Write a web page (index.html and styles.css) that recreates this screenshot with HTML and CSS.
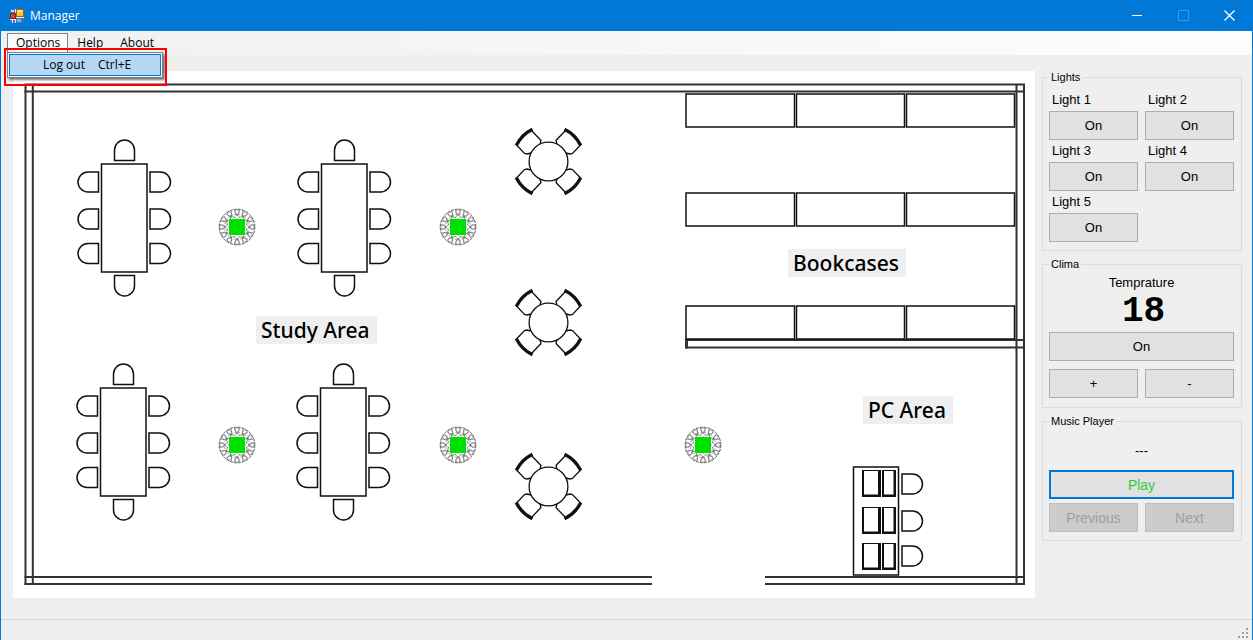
FILE: index.html
```html
<!DOCTYPE html>
<html lang="en">
<head>
<meta charset="utf-8">
<title>Manager</title>
<link rel="stylesheet" href="styles.css">
</head>
<body>
<div class="window">
  <header class="titlebar">
    <svg class="app-icon" viewBox="0 0 14 14" aria-hidden="true">
      <rect width="14" height="14" fill="#e6edf5"/>
      <rect x="0" y="0" width="5" height="4" fill="#3c74c4"/>
      <rect x="1" y="1" width="3" height="2" fill="#c9dbf3"/>
      <rect x="0" y="4" width="6" height="6" fill="#8e1c1c"/>
      <rect x="1" y="5" width="4" height="4" fill="#d8442c"/>
      <rect x="6" y="0" width="8" height="8" fill="#9a6b10"/>
      <rect x="7" y="1" width="6" height="6" fill="#f7c53a"/>
      <rect x="7" y="1" width="5" height="2" fill="#fde48c"/>
      <rect x="6" y="9" width="8" height="5" fill="#3c74c4"/>
      <rect x="7" y="10" width="4" height="3" fill="#84aee8"/>
      <rect x="0" y="11" width="2" height="3" fill="#3c74c4"/>
      <rect x="3" y="11" width="2" height="3" fill="#3c74c4"/>
    </svg>
    <h1 class="title">Manager</h1>
    <button class="caption-button" type="button" aria-label="Minimize">
      <svg viewBox="0 0 11 11"><path d="M0 5.5H10"/></svg>
    </button>
    <button class="caption-button" type="button" aria-label="Maximize" disabled>
      <svg viewBox="0 0 11 11"><path d="M.5 .5H10.500V10.500H.5Z"/></svg>
    </button>
    <button class="caption-button" type="button" aria-label="Close">
      <svg viewBox="0 0 11 11"><path stroke-width="1.300" d="M.5 .5L10.500 10.500M10.500 .5L.5 10.500"/></svg>
    </button>
  </header>

  <nav class="menubar">
    <div class="menu">
      <button class="menu-button menu-button-open" type="button" aria-expanded="true">Options</button>
      <div class="dropdown">
        <button class="dropdown-item" type="button"><span>Log out</span><span>Ctrl+E</span></button>
      </div>
      <div class="highlight"></div>
    </div>
    <button class="menu-button" type="button">Help</button>
    <button class="menu-button" type="button">About</button>
  </nav>

  <main class="content">
    <svg class="plan" viewBox="13 71 1022 527" role="img" aria-label="Floor plan">
      <defs>
        <path id="chair" d="M-10 10.500V0a10 10 0 0 1 20 0V10.500Z"/>
        <g id="long-table">
          <rect x="101.500" y="164" width="45.500" height="108"/>
          <use href="#chair" x="124.500" y="150"/>
          <use href="#chair" transform="translate(124.500 286) rotate(180)"/>
          <use href="#chair" transform="translate(88 182) rotate(-90)"/>
          <use href="#chair" transform="translate(88 219) rotate(-90)"/>
          <use href="#chair" transform="translate(88 253.500) rotate(-90)"/>
          <use href="#chair" transform="translate(160.500 182) rotate(90)"/>
          <use href="#chair" transform="translate(160.500 219) rotate(90)"/>
          <use href="#chair" transform="translate(160.500 253.500) rotate(90)"/>
        </g>
        <g id="seat">
          <path stroke-width="1.300" d="M17 -31L7.500 -21L8.500 -17.500M17.500 -8.500L21.500 -7.500L24 -8L32 -16.500"/>
          <path stroke-width="3.300" d="M16 -32.300A36 36 0 0 1 32.300 -16"/>
        </g>
        <g id="round-table">
          <circle r="19.400" stroke-width="1.300"/>
          <use href="#seat"/>
          <use href="#seat" transform="scale(-1 1)"/>
          <use href="#seat" transform="scale(1 -1)"/>
          <use href="#seat" transform="scale(-1 -1)"/>
        </g>
        <g id="petal" fill="none" stroke="#777" stroke-width=".7">
          <circle cy="-15" r="2.200"/>
          <path d="M-3 -17L0 -11L3 -17M-3 -9L0 -12.500L3 -9M0 -9V-6"/>
        </g>
        <g id="lamp">
          <circle r="17.800" fill="#fff" stroke="#555" stroke-width="1" stroke-dasharray="3 1"/>
          <circle r="12.500" fill="none" stroke="#888" stroke-width=".8" stroke-dasharray="2 1.500"/>
          <use href="#petal"/>
          <use href="#petal" transform="rotate(30)"/>
          <use href="#petal" transform="rotate(60)"/>
          <use href="#petal" transform="rotate(90)"/>
          <use href="#petal" transform="rotate(120)"/>
          <use href="#petal" transform="rotate(150)"/>
          <use href="#petal" transform="rotate(180)"/>
          <use href="#petal" transform="rotate(210)"/>
          <use href="#petal" transform="rotate(240)"/>
          <use href="#petal" transform="rotate(270)"/>
          <use href="#petal" transform="rotate(300)"/>
          <use href="#petal" transform="rotate(330)"/>
          <rect x="-8" y="-8" width="16" height="16" fill="#00e000"/>
        </g>
        <g id="bookcases">
          <rect x="686" y="0" width="108.500" height="33"/>
          <rect x="796.500" y="0" width="108" height="33"/>
          <rect x="906.500" y="0" width="108" height="33"/>
        </g>
        <g id="computer">
          <path fill="#111" stroke="none" fill-rule="evenodd" d="M862 0H881V27H862ZM864 1V24.500H878V1ZM882 0H896V27H882ZM884 1V24.500H893.500V1Z"/>
        </g>
      </defs>

      <g class="walls">
        <path d="M24.500 84.500H1025M24.500 91.500H1025"/>
        <path d="M25.500 84V585M32.800 84V585"/>
        <path d="M1016.500 84V585M1024 84V585"/>
        <path d="M24.500 577H652M24.500 584H652M765 577H1025M765 584H1025"/>
        <path d="M685 340H1024M685 347.500H1024"/>
        <path stroke-width="3" d="M686.500 339V348.500"/>
      </g>

      <g class="furniture">
        <use href="#long-table"/>
        <use href="#long-table" x="220"/>
        <use href="#long-table" x="-1" y="224"/>
        <use href="#long-table" x="219" y="224"/>
        <use href="#round-table" x="548.500" y="161.500"/>
        <use href="#round-table" x="548.500" y="322.500"/>
        <use href="#round-table" x="548.500" y="486.500"/>
        <use href="#bookcases" y="94"/>
        <use href="#bookcases" y="193"/>
        <use href="#bookcases" y="306"/>
        <rect x="853.500" y="467" width="45" height="108"/>
        <use href="#computer" y="470"/>
        <use href="#computer" y="507"/>
        <use href="#computer" y="543"/>
        <use href="#chair" transform="translate(912.500 484) rotate(90)"/>
        <use href="#chair" transform="translate(912.500 521) rotate(90)"/>
        <use href="#chair" transform="translate(912.500 556) rotate(90)"/>
      </g>

      <use href="#lamp" x="237" y="227"/>
      <use href="#lamp" x="458" y="227"/>
      <use href="#lamp" x="237" y="445"/>
      <use href="#lamp" x="458" y="445"/>
      <use href="#lamp" x="703" y="445"/>

      <g class="area">
        <rect x="256" y="316" width="121" height="28"/>
        <text x="261" y="338">Study Area</text>
        <rect x="788" y="249" width="118" height="28"/>
        <text x="793" y="271">Bookcases</text>
        <rect x="863" y="396" width="90" height="28"/>
        <text x="868" y="418">PC Area</text>
      </g>
    </svg>

    <aside class="sidebar">
      <fieldset class="group lights">
        <legend>Lights</legend>
        <div class="light"><label for="light1">Light 1</label><button id="light1" class="button" type="button">On</button></div>
        <div class="light"><label for="light2">Light 2</label><button id="light2" class="button" type="button">On</button></div>
        <div class="light"><label for="light3">Light 3</label><button id="light3" class="button" type="button">On</button></div>
        <div class="light"><label for="light4">Light 4</label><button id="light4" class="button" type="button">On</button></div>
        <div class="light"><label for="light5">Light 5</label><button id="light5" class="button" type="button">On</button></div>
      </fieldset>

      <fieldset class="group clima">
        <legend>Clima</legend>
        <label class="wide caption" for="temperature">Temprature</label>
        <output class="wide temperature" id="temperature">18</output>
        <button class="wide button" type="button">On</button>
        <button class="button" type="button">+</button>
        <button class="button" type="button">-</button>
      </fieldset>

      <fieldset class="group music">
        <legend>Music Player</legend>
        <p class="wide track">---</p>
        <button class="wide button button-play" type="button">Play</button>
        <button class="button" type="button" disabled>Previous</button>
        <button class="button" type="button" disabled>Next</button>
      </fieldset>
    </aside>
  </main>

  <footer class="statusbar">
    <svg class="grip" viewBox="0 0 10 10" aria-hidden="true">
      <path d="M8 0h2v2h-2zM4 4h2v2h-2zM8 4h2v2h-2zM0 8h2v2h-2zM4 8h2v2h-2zM8 8h2v2h-2z"/>
    </svg>
  </footer>
</div>
</body>
</html>
```

FILE: styles.css
```css
* {
  box-sizing: border-box;
}

body {
  margin: 0;
  background: #efefef;
  color: #000;
  font: 13px/16px "Liberation Sans", Arial, sans-serif;
}

button {
  margin: 0;
  padding: 0;
  border: 0;
  border-radius: 0;
  background: none;
  color: inherit;
  font: inherit;
}

.window {
  display: flex;
  flex-direction: column;
  min-height: 100vh;
  border: solid #0078d7;
  border-width: 0 1px;
}

/* Title bar */
.titlebar {
  display: flex;
  align-items: center;
  height: 31px;
  padding-left: 9px;
  background: #0078d7;
  color: #fff;
}

.app-icon {
  width: 14px;
  height: 14px;
}

.title {
  flex: 1;
  margin: 0 0 0 6px;
  font: 12px/16px "Open Sans", "Noto Sans", sans-serif;
}

.caption-button {
  display: flex;
  align-items: center;
  justify-content: center;
  width: 46px;
  height: 31px;
}

.caption-button svg {
  width: 11px;
  height: 11px;
  fill: none;
  stroke: #fff;
}

.caption-button:disabled {
  opacity: 0.25;
}

/* Menu bar */
.menubar {
  display: flex;
  height: 24px;
  padding: 2px 6px 0;
  background: linear-gradient(90deg, #f0f0f0, #fdfdfd);
  font: 12px/18px "Open Sans", "Noto Sans", sans-serif;
}

.menu {
  position: relative;
}

.menu-button {
  height: 20px;
  padding: 0 7px 0 8px;
  border: 1px solid transparent;
}

.menu-button-open {
  border-color: #808080;
  border-bottom-color: #fafafa;
  background: #fafafa;
}

.dropdown {
  position: absolute;
  z-index: 1;
  top: 19px;
  left: 0;
  width: 156px;
  padding: 1px;
  border: 1px solid #808080;
  background: #f8f8f8;
  box-shadow: 2px 2px 2px #0008;
}

.dropdown-item {
  display: flex;
  gap: 13px;
  width: 100%;
  height: 22px;
  padding-left: 33px;
  border: 1px solid #0078d7;
  background: #b5d7f3;
  line-height: 20px;
}

.highlight {
  position: absolute;
  z-index: 2;
  top: 15px;
  left: -3px;
  width: 163px;
  height: 38px;
  border: 2px solid #f00;
  pointer-events: none;
}

/* Floor plan and controls */
.content {
  display: flex;
  flex: 1;
  align-items: flex-start;
  gap: 7px;
  padding: 16px 10px 16px 12px;
}

.plan {
  display: block;
  flex: 1;
  min-width: 0;
  background: #fff;
}

.walls {
  fill: none;
  stroke: #333;
  stroke-width: 2;
}

.furniture {
  fill: none;
  stroke: #111;
  stroke-width: 1.5;
}

.area rect {
  fill: #efefef;
}

.area text {
  font: 500 21px "Noto Sans", "Open Sans", sans-serif;
}

.sidebar {
  display: flex;
  flex-direction: column;
  gap: 6px;
  width: 200px;
  margin-top: -1px;
}

.group {
  display: grid;
  grid-template-columns: 1fr 1fr;
  column-gap: 7px;
  min-width: 0;
  margin: 0;
  border: 1px solid #dcdcdc;
}

.group legend {
  padding: 0 2px;
  font-size: 11px;
  line-height: 14px;
}

.lights {
  padding: 5px 7px 8px 6px;
}

.light {
  display: flex;
  flex-direction: column;
}

.light label {
  padding-left: 3px;
  line-height: 22px;
}

.clima {
  padding: 3px 7px 9px 6px;
}

.wide {
  grid-column: 1 / -1;
}

.caption {
  line-height: 18px;
  text-align: center;
}

.temperature {
  padding-left: 4px;
  font: bold 36px/40px "Liberation Mono", monospace;
  text-align: center;
}

.clima .wide.button {
  margin-bottom: 8px;
}

.music {
  padding: 3px 7px 8px 6px;
}

.track {
  margin: 0;
  line-height: 39px;
  text-align: center;
}

.button {
  height: 29px;
  border: 1px solid #adadad;
  background: #e1e1e1;
}

.music .button {
  font-size: 14px;
}

.button:disabled {
  border-color: #bfbfbf;
  background: #ccc;
  color: #9f9f9f;
}

.button-play {
  margin-bottom: 4px;
  border: 2px solid #0078d7;
  color: #32cd32;
}

.music .button-play {
  border-color: #0078d7;
}

/* Status bar */
.statusbar {
  display: flex;
  align-items: flex-end;
  justify-content: flex-end;
  height: 21px;
  padding: 0 4px 2px;
  border-top: 1px solid #d5d5d5;
}

.grip {
  width: 10px;
  height: 10px;
  fill: #a0a0a0;
}
```
